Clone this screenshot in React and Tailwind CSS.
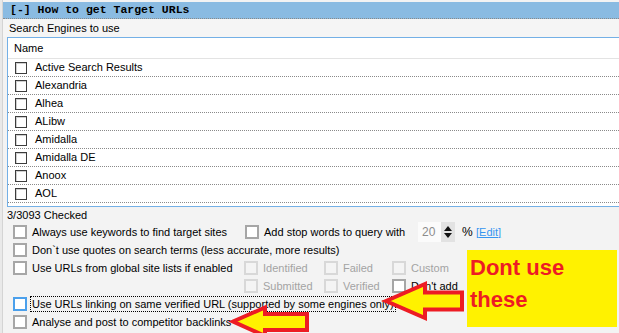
import React from 'react';

const engines = ['Active Search Results', 'Alexandria', 'Alhea', 'ALibw', 'Amidalla', 'Amidalla DE', 'Anoox', 'AOL', ''];

const ListBox = () => (
  <span className="w-[12px] h-[12px] shrink-0 border border-[#3c3c3c] bg-white shadow-[inset_1px_1px_0_#d0d0d0]" />
);

const Box = ({ kind = 'normal' }) => {
  const cls =
    kind === 'disabled'
      ? 'border-[#d8d8d8] bg-[#f4f4f4]'
      : kind === 'focus'
      ? 'border-[#4ba0ec] bg-white'
      : 'border-[#a6a6a6] bg-white';
  return <span className={`w-[14px] h-[14px] shrink-0 border-2 ${cls}`} />;
};

const Opt = ({ kind, label, width, dim }) => (
  <div className="flex items-center shrink-0" style={width ? { width } : undefined}>
    <Box kind={kind} />
    <span className={`ml-[5px] whitespace-nowrap ${dim ? 'text-[#a3a3a3]' : ''}`}>{label}</span>
  </div>
);

export default function App() {
  return (
    <div className="w-[619px] h-[333px] overflow-hidden relative bg-[#e9e9e9] font-['Liberation_Sans',Arial,sans-serif] text-[11px] text-black">
      <div className="h-full ml-[2px] border-l border-[#d4d4d4] flex flex-col pt-[2px] bg-[#f3f3f3]">
        {/* Section header */}
        <div className="h-[17px] shrink-0 bg-[#8abbe2] border-b border-dotted border-[#8a8a8a] pl-[7px] font-['Liberation_Mono',monospace] font-bold text-[11.5px] leading-[16px] whitespace-pre">
          [-] How to get Target URLs
        </div>
        <div className="h-[18px] shrink-0 pl-[6px] leading-[18px] bg-[#f5f5f5]">Search Engines to use</div>

        {/* Engine list */}
        <div className="ml-[4px] h-[170px] shrink-0 overflow-hidden border-t border-l border-b border-[#74b0e6] bg-white">
          <div className="h-[21px] pl-[6px] leading-[20px] border-b border-[#e3e3e3]">Name</div>
          {engines.map((name, i) => (
            <div key={i} className="h-[18px] pl-[7px] flex items-center border-b border-dotted border-[#8a8a8a]">
              <ListBox />
              <span className="ml-[8px]">{name}</span>
            </div>
          ))}
        </div>

        <div className="h-[16px] shrink-0 pl-[4px] leading-[16px]">3/3093 Checked</div>

        {/* Options */}
        <div className="pl-[10px] flex flex-col">
          <div className="h-[18px] flex items-center">
            <Opt label="Always use keywords to find target sites" width={232} />
            <Opt label="Add stop words to query with" width={173} />
            <div className="w-[37px] h-[20px] flex bg-[#fbfbfb]">
              <span className="flex-1 pl-[4px] leading-[20px] text-[#8c8c8c] text-[12px]">20</span>
              <span className="w-[14px] bg-[#e2e2e2] flex flex-col items-center justify-center gap-[2px]">
                <svg width="8" height="5" viewBox="0 0 8 5"><path d="M4 0L8 5H0Z" fill="#111" /></svg>
                <svg width="8" height="5" viewBox="0 0 8 5"><path d="M0 0H8L4 5Z" fill="#111" /></svg>
              </span>
            </div>
            <span className="ml-[7px] w-[14px] text-[12px]">%</span>
            <span className="text-[#3595f0] underline">[Edit]</span>
          </div>

          <div className="h-[18px] flex items-center">
            <Opt label="Don`t use quotes on search terms (less accurate, more results)" />
          </div>

          <div className="h-[18px] flex items-center">
            <Opt label="Use URLs from global site lists if enabled" width={231} />
            <Opt kind="disabled" dim label="Identified" width={80} />
            <Opt kind="disabled" dim label="Failed" width={68} />
            <Opt kind="disabled" dim label="Custom" />
          </div>
          <div className="h-[18px] flex items-center">
            <div className="w-[231px] shrink-0" />
            <Opt kind="disabled" dim label="Submitted" width={80} />
            <Opt kind="disabled" dim label="Verified" width={68} />
            <Opt label="Don't add" />
          </div>

          <div className="h-[18px] flex items-center">
            <Box kind="focus" />
            <span className="ml-[3px] px-[1px] border border-dotted border-black leading-[14px] whitespace-nowrap">
              Use URLs linking on same verified URL (supported by some engines only)
            </span>
          </div>

          <div className="h-[18px] flex items-center">
            <Opt label="Analyse and post to competitor backlinks" />
          </div>
        </div>
      </div>

      {/* Annotation overlay */}
      <div className="absolute left-[467px] top-[250px] w-[150px] h-[77px] bg-[#fff200] pl-[3px] pt-[2px] font-['Liberation_Sans',Arial,sans-serif] font-bold text-[22px] leading-[32px] text-[#ed1c24]">
        Dont use
        <br />
        these
      </div>
      <svg className="absolute inset-0 pointer-events-none" width="619" height="333" viewBox="0 0 619 333">
        <path d="M386 301 L425 284 L425 292.5 L462 292.5 L462 309.5 L425 309.5 L425 318 Z" fill="#fff200" stroke="#ed1c24" strokeWidth="4" strokeLinejoin="miter" />
        <path d="M233 321.5 L265 307.5 L265 314 L307 314 L307 330 L265 330 L265 336 Z" fill="#fff200" stroke="#ed1c24" strokeWidth="4" strokeLinejoin="miter" />
      </svg>
    </div>
  );
}
